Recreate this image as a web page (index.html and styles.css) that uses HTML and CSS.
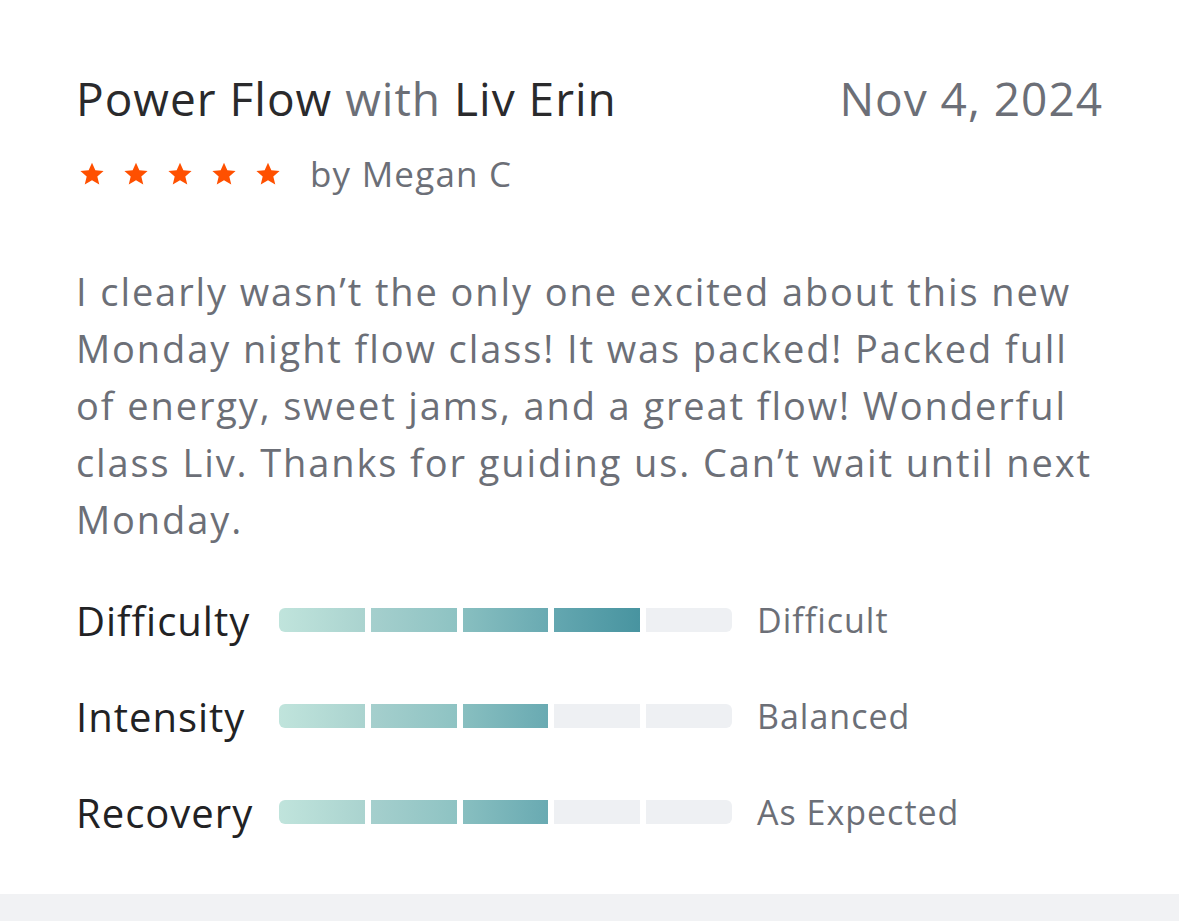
FILE: index.html
```
<!DOCTYPE html>
<html lang="en">
<head>
    <meta charset="UTF-8">
    <meta name="viewport" content="width=device-width, initial-scale=1.0">
    <title>Class Review</title>
    <link rel="stylesheet" href="styles.css">
</head>
<body>
    <div class="review">
        <div class="review-head">
            <h2 class="class-title">Power Flow <span class="muted">with</span> Liv Erin</h2>
            <div class="review-date">Nov 4, 2024</div>
        </div>
        <div class="review-meta">
            <div class="stars">
                <svg class="star" viewBox="0 0 24 24"><path d="M12 1.5l3.1 7 7.6.7-5.8 5 1.8 7.5L12 17.8l-6.7 3.9 1.8-7.5-5.8-5 7.6-.7z"/></svg>
                <svg class="star" viewBox="0 0 24 24"><path d="M12 1.5l3.1 7 7.6.7-5.8 5 1.8 7.5L12 17.8l-6.7 3.9 1.8-7.5-5.8-5 7.6-.7z"/></svg>
                <svg class="star" viewBox="0 0 24 24"><path d="M12 1.5l3.1 7 7.6.7-5.8 5 1.8 7.5L12 17.8l-6.7 3.9 1.8-7.5-5.8-5 7.6-.7z"/></svg>
                <svg class="star" viewBox="0 0 24 24"><path d="M12 1.5l3.1 7 7.6.7-5.8 5 1.8 7.5L12 17.8l-6.7 3.9 1.8-7.5-5.8-5 7.6-.7z"/></svg>
                <svg class="star" viewBox="0 0 24 24"><path d="M12 1.5l3.1 7 7.6.7-5.8 5 1.8 7.5L12 17.8l-6.7 3.9 1.8-7.5-5.8-5 7.6-.7z"/></svg>
            </div>
            <span class="author">by Megan C</span>
        </div>

        <p class="review-text">I clearly wasn’t the only one excited about this new Monday night flow class! It was packed! Packed full of energy, sweet jams, and a great flow! Wonderful class Liv. Thanks for guiding us. Can’t wait until next Monday.</p>

        <div class="ratings">
            <div class="rating-row">
                <span class="rating-name">Difficulty</span>
                <div class="meter">
                    <span class="seg s1"></span><span class="seg s2"></span><span class="seg s3"></span><span class="seg s4"></span><span class="seg"></span>
                </div>
                <span class="rating-value">Difficult</span>
            </div>
            <div class="rating-row">
                <span class="rating-name">Intensity</span>
                <div class="meter">
                    <span class="seg s1"></span><span class="seg s2"></span><span class="seg s3"></span><span class="seg"></span><span class="seg"></span>
                </div>
                <span class="rating-value">Balanced</span>
            </div>
            <div class="rating-row">
                <span class="rating-name">Recovery</span>
                <div class="meter">
                    <span class="seg s1"></span><span class="seg s2"></span><span class="seg s3"></span><span class="seg"></span><span class="seg"></span>
                </div>
                <span class="rating-value">As Expected</span>
            </div>
        </div>
    </div>
    <div class="footer-strip"></div>
</body>
</html>
```

FILE: styles.css
```
body {
    font-family: 'Open Sans', 'Noto Sans', sans-serif;
    background-color: #f1f2f4;
    margin: 0;
}

.review {
    background: #ffffff;
    height: 894px;
    box-sizing: border-box;
    padding: 67px 76px 0 76px;
}

.review-head {
    display: flex;
    justify-content: space-between;
    align-items: baseline;
}

.class-title {
    margin: 0;
    font-size: 46px;
    font-weight: 400;
    letter-spacing: 1px;
    color: #2a2a2c;
    line-height: 58px;
}

.muted {
    color: #6c6f77;
}

.review-date {
    font-size: 46px;
    letter-spacing: 1px;
    color: #6c6f77;
}

.review-meta {
    display: flex;
    align-items: center;
    margin-top: 21px;
}

.stars {
    display: flex;
    gap: 18px;
    margin-left: 3px;
}

.star {
    width: 26px;
    height: 26px;
    fill: #ff5000;
}

.author {
    margin-left: 29px;
    font-size: 35px;
    letter-spacing: 1.2px;
    color: #6c6f77;
}

.review-text {
    margin: 66px 0 0;
    font-size: 38px;
    letter-spacing: 1.9px;
    line-height: 57px;
    color: #6c6f77;
}

.ratings {
    margin-top: 24px;
}

.rating-row {
    display: flex;
    align-items: center;
    height: 96px;
}

.rating-name {
    width: 203px;
    font-size: 40px;
    letter-spacing: 1px;
    color: #222224;
}

.meter {
    display: flex;
    gap: 6px;
    width: 453px;
}

.seg {
    flex: 1;
    height: 24px;
    background: #eef0f3;
}

.seg:first-child {
    border-radius: 6px 0 0 6px;
}

.seg:last-child {
    border-radius: 0 6px 6px 0;
}

.s1 { background: linear-gradient(90deg, #c0e4dc, #aad3cf); }
.s2 { background: linear-gradient(90deg, #a5cfcd, #8ec3c3); }
.s3 { background: linear-gradient(90deg, #88bfc0, #69aab2); }
.s4 { background: linear-gradient(90deg, #64a7b0, #4894a0); }

.rating-value {
    margin-left: 25px;
    font-size: 34px;
    letter-spacing: 1px;
    color: #6c6f77;
}

.footer-strip {
    height: 27px;
}
```
